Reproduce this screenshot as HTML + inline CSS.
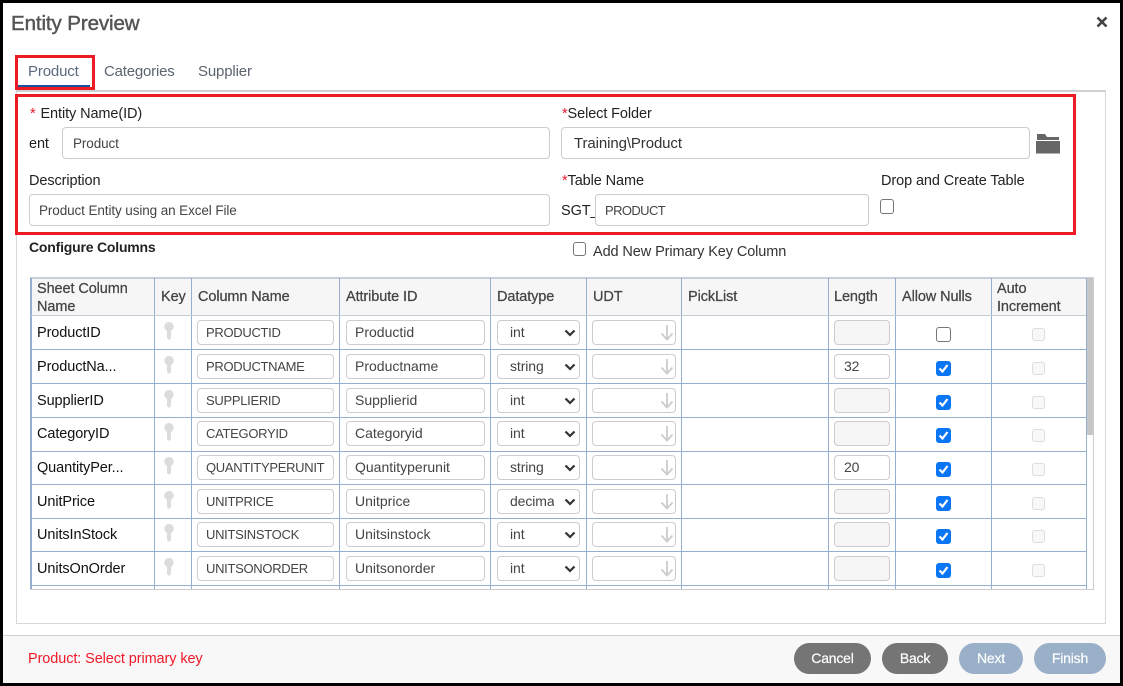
<!DOCTYPE html>
<html><head><meta charset="utf-8"><title>Entity Preview</title>
<style>
html,body{margin:0;padding:0;background:#000}
body{width:1123px;height:686px;overflow:hidden;position:relative;font-family:"Liberation Sans",sans-serif;font-size:14.5px;color:#222;letter-spacing:-.1px}
#w{position:absolute;left:3px;top:3px;width:1117px;height:680px;background:#fff}
#p{position:absolute;left:0;top:0;width:1123px;height:686px}
#p div,#p svg{position:absolute;box-sizing:border-box}
.t{white-space:nowrap;line-height:18px}
.f{background:#fff;border:1px solid #ccc;border-radius:4px;color:#444;white-space:nowrap;overflow:hidden}
.v{background:#94afd0}
.h{white-space:nowrap;line-height:18px;color:#444;-webkit-text-stroke:.25px #444}
.r{left:0;width:1123px;height:25px}
.s{left:37px;top:4px;line-height:18px;color:#111;white-space:nowrap}
.k{left:164px;top:2px}
.c{left:197px;top:0;width:137px;height:25px;line-height:23px;padding-left:8px;font-size:13px;letter-spacing:-.3px}
.i{left:346px;top:0;width:139px;height:25px;line-height:23px;padding-left:8px;font-size:14px;letter-spacing:0}
.d{left:497px;top:0;width:83px;height:25px;line-height:23px;padding-left:12px;font-size:14px}
.d span{display:block;width:44px;overflow:hidden}
.ch{left:564px;top:9px}
.u{left:592px;top:0;width:84px;height:25px}
.ar{left:660px;top:5px}
.l{left:834px;top:0;width:56px;height:25px;line-height:23px;padding-left:9px;background:#f6f6f6;font-size:14px}
.l.e{background:#fff}
.n{left:936px;top:7px;width:15px;height:15px;border-radius:3px;background:#0b76f5}
.n svg{left:2px;top:2px}
.n.o{background:#fff;border:1.5px solid #767676}
.a{left:1032px;top:8px;width:13px;height:13px;border:1px solid #ddd;border-radius:3px;background:#f8f8f8}
.b{border-radius:16px;height:31px;top:643px;color:#fff;text-align:center;line-height:31px;font-size:14px;letter-spacing:-.2px;-webkit-text-stroke:.2px #fff}
</style></head><body>
<div id="w"></div>
<div id="p">
<div class="t" style="left:11px;top:13px;font-size:20.500px;line-height:22px;color:#555;letter-spacing:-.1px;-webkit-text-stroke:.45px #555">Entity Preview</div>
<svg style="left:1096px;top:16px" width="12" height="12" viewBox="0 0 12 12"><path d="M1.5 1.5L10.5 10.5M10.5 1.5L1.5 10.5" stroke="#444" stroke-width="2.600"/></svg>

<!-- tab panel -->
<div style="left:16px;top:90px;width:1090px;height:534px;border:1px solid #d8d8d8;border-top:2px solid #d0d0d0"></div>
<div style="left:17px;top:85px;width:73px;height:3px;background:#1f4e9c"></div>
<div style="left:15px;top:55px;width:80px;height:35px;border:3px solid #ed1c24"></div>
<div class="t" style="left:28px;top:63px;color:#5a6b80;font-size:15px;letter-spacing:-.15px">Product</div>
<div class="t" style="left:104px;top:63px;color:#5b6470;font-size:15px;letter-spacing:-.2px">Categories</div>
<div class="t" style="left:198px;top:63px;color:#5b6470;font-size:15px;letter-spacing:-.15px">Supplier</div>

<!-- form -->
<div style="left:15px;top:94px;width:1061px;height:141px;border:3px solid #ed1c24"></div>
<div class="t" style="left:30px;top:105px"><span style="color:#e8192c">*</span>&nbsp;<span style="margin-left:1px">Entity Name(ID)</span></div>
<div class="t" style="left:29px;top:135px">ent</div>
<div class="f" style="left:62px;top:127px;width:488px;height:32px;line-height:31px;padding-left:10px;font-size:13.5px">Product</div>
<div class="t" style="left:29px;top:172px">Description</div>
<div class="f" style="left:29px;top:194px;width:521px;height:32px;line-height:31px;padding-left:9px;font-size:13.5px">Product Entity using an Excel File</div>
<div class="t" style="left:562px;top:105px"><span style="color:#e8192c">*</span>Select Folder</div>
<div class="f" style="left:561px;top:127px;width:469px;height:32px;line-height:31px;padding-left:12px;color:#333;font-size:15px">Training\Product</div>
<svg style="left:1036px;top:134px" width="24" height="20" viewBox="0 0 24 20"><path d="M1 0H9L11 3H23V6H1Z M0 7H24V19.500H0Z" fill="#666"/></svg>
<div class="t" style="left:562px;top:172px"><span style="color:#e8192c">*</span>Table Name</div>
<div class="t" style="left:561px;top:202px">SGT_</div>
<div class="f" style="left:595px;top:194px;width:274px;height:32px;line-height:31px;padding-left:9px;font-size:13px;letter-spacing:-.6px">PRODUCT</div>
<div class="t" style="left:881px;top:172px">Drop and Create Table</div>
<div style="left:880px;top:199px;width:14px;height:15px;border:1.5px solid #767676;border-radius:3px;background:#fff"></div>

<div class="t" style="left:29px;top:238px;font-weight:bold;font-size:14px;letter-spacing:-.2px;color:#222">Configure Columns</div>
<div style="left:573px;top:242px;width:13px;height:14px;border:1.5px solid #767676;border-radius:3px;background:#fff"></div>
<div class="t" style="left:593px;top:243px;color:#333">Add New Primary Key Column</div>

<!-- table frame -->
<div style="left:30px;top:277px;width:1064px;height:313px;border:1px solid #ccc;border-left:0;border-top:2px solid #c6d0dc"></div>
<div style="left:31px;top:279px;width:1055px;height:36px;background:#f6f6f6"></div>
<div style="left:1087px;top:278px;width:6px;height:157px;background:#c6c6c6"></div>

<div class="v" style="left:30px;top:278px;width:2px;height:311px"></div>
<div class="v" style="left:154px;top:278px;width:1px;height:311px"></div>
<div class="v" style="left:191px;top:278px;width:1px;height:311px"></div>
<div class="v" style="left:339px;top:278px;width:1px;height:311px"></div>
<div class="v" style="left:490px;top:278px;width:1px;height:311px"></div>
<div class="v" style="left:586px;top:278px;width:1px;height:311px"></div>
<div class="v" style="left:681px;top:278px;width:1px;height:311px"></div>
<div class="v" style="left:828px;top:278px;width:1px;height:311px"></div>
<div class="v" style="left:895px;top:278px;width:1px;height:311px"></div>
<div class="v" style="left:991px;top:278px;width:1px;height:311px"></div>
<div class="v" style="left:1086px;top:278px;width:1px;height:311px"></div>
<div style="left:31px;top:315px;width:1055px;height:1px;background:#c4ccd6"></div>
<div class="v" style="left:30px;top:349px;width:1056px;height:1px"></div>
<div class="v" style="left:30px;top:383px;width:1056px;height:1px"></div>
<div class="v" style="left:30px;top:417px;width:1056px;height:1px"></div>
<div class="v" style="left:30px;top:451px;width:1056px;height:1px"></div>
<div class="v" style="left:30px;top:484px;width:1056px;height:1px"></div>
<div class="v" style="left:30px;top:518px;width:1056px;height:1px"></div>
<div class="v" style="left:30px;top:551px;width:1056px;height:1px"></div>
<div class="v" style="left:30px;top:585px;width:1056px;height:1px"></div>

<!-- header -->
<div class="h" style="left:37px;top:280px">Sheet Column</div>
<div class="h" style="left:37px;top:298px">Name</div>
<div class="h" style="left:161px;top:288px">Key</div>
<div class="h" style="left:198px;top:288px">Column Name</div>
<div class="h" style="left:346px;top:288px">Attribute ID</div>
<div class="h" style="left:497px;top:288px">Datatype</div>
<div class="h" style="left:593px;top:288px">UDT</div>
<div class="h" style="left:688px;top:288px">PickList</div>
<div class="h" style="left:834px;top:288px">Length</div>
<div class="h" style="left:902px;top:288px">Allow Nulls</div>
<div class="h" style="left:997px;top:280px">Auto</div>
<div class="h" style="left:997px;top:298px">Increment</div>

<!-- rows -->
<div class="r" style="top:320px">
<div class="s">ProductID</div>
<svg class="k" width="10" height="18" viewBox="0 0 10 18"><path d="M5 0a4.6 4.6 0 0 1 2 8.8V16L5 18 3 16V8.8A4.6 4.6 0 0 1 5 0Z" fill="#dcdcdc"/></svg>
<div class="f c">PRODUCTID</div><div class="f i">Productid</div>
<div class="f d"><span>int</span></div>
<svg class="ch" width="12" height="8" viewBox="0 0 12 8"><path d="M1.5 1.5L6 6 10.500 1.500" fill="none" stroke="#333" stroke-width="2.200"/></svg>
<div class="f u"></div>
<svg class="ar" width="14" height="16" viewBox="0 0 14 16"><path d="M7 0V14M1.500 8.500L7 14.500 12.500 8.500" fill="none" stroke="#ccc" stroke-width="1.800"/></svg>
<div class="f l"></div>
<div class="n o"></div><div class="a"></div>
</div>

<div class="r" style="top:354px">
<div class="s">ProductNa...</div>
<svg class="k" width="10" height="18" viewBox="0 0 10 18"><path d="M5 0a4.6 4.6 0 0 1 2 8.8V16L5 18 3 16V8.8A4.6 4.6 0 0 1 5 0Z" fill="#dcdcdc"/></svg>
<div class="f c">PRODUCTNAME</div><div class="f i">Productname</div>
<div class="f d"><span>string</span></div>
<svg class="ch" width="12" height="8" viewBox="0 0 12 8"><path d="M1.5 1.5L6 6 10.500 1.500" fill="none" stroke="#333" stroke-width="2.200"/></svg>
<div class="f u"></div>
<svg class="ar" width="14" height="16" viewBox="0 0 14 16"><path d="M7 0V14M1.500 8.500L7 14.500 12.500 8.500" fill="none" stroke="#ccc" stroke-width="1.800"/></svg>
<div class="f l e">32</div>
<div class="n"><svg width="11" height="11" viewBox="0 0 11 11"><path d="M1.500 5.500L4.500 8.500 9.500 2" fill="none" stroke="#fff" stroke-width="2.200"/></svg></div><div class="a"></div>
</div>

<div class="r" style="top:388px">
<div class="s">SupplierID</div>
<svg class="k" width="10" height="18" viewBox="0 0 10 18"><path d="M5 0a4.6 4.6 0 0 1 2 8.8V16L5 18 3 16V8.8A4.6 4.6 0 0 1 5 0Z" fill="#dcdcdc"/></svg>
<div class="f c">SUPPLIERID</div><div class="f i">Supplierid</div>
<div class="f d"><span>int</span></div>
<svg class="ch" width="12" height="8" viewBox="0 0 12 8"><path d="M1.5 1.5L6 6 10.500 1.500" fill="none" stroke="#333" stroke-width="2.200"/></svg>
<div class="f u"></div>
<svg class="ar" width="14" height="16" viewBox="0 0 14 16"><path d="M7 0V14M1.500 8.500L7 14.500 12.500 8.500" fill="none" stroke="#ccc" stroke-width="1.800"/></svg>
<div class="f l"></div>
<div class="n"><svg width="11" height="11" viewBox="0 0 11 11"><path d="M1.500 5.500L4.500 8.500 9.500 2" fill="none" stroke="#fff" stroke-width="2.200"/></svg></div><div class="a"></div>
</div>

<div class="r" style="top:421px">
<div class="s">CategoryID</div>
<svg class="k" width="10" height="18" viewBox="0 0 10 18"><path d="M5 0a4.6 4.6 0 0 1 2 8.8V16L5 18 3 16V8.8A4.6 4.6 0 0 1 5 0Z" fill="#dcdcdc"/></svg>
<div class="f c">CATEGORYID</div><div class="f i">Categoryid</div>
<div class="f d"><span>int</span></div>
<svg class="ch" width="12" height="8" viewBox="0 0 12 8"><path d="M1.5 1.5L6 6 10.500 1.500" fill="none" stroke="#333" stroke-width="2.200"/></svg>
<div class="f u"></div>
<svg class="ar" width="14" height="16" viewBox="0 0 14 16"><path d="M7 0V14M1.500 8.500L7 14.500 12.500 8.500" fill="none" stroke="#ccc" stroke-width="1.800"/></svg>
<div class="f l"></div>
<div class="n"><svg width="11" height="11" viewBox="0 0 11 11"><path d="M1.500 5.500L4.500 8.500 9.500 2" fill="none" stroke="#fff" stroke-width="2.200"/></svg></div><div class="a"></div>
</div>

<div class="r" style="top:455px">
<div class="s">QuantityPer...</div>
<svg class="k" width="10" height="18" viewBox="0 0 10 18"><path d="M5 0a4.6 4.6 0 0 1 2 8.8V16L5 18 3 16V8.8A4.6 4.6 0 0 1 5 0Z" fill="#dcdcdc"/></svg>
<div class="f c">QUANTITYPERUNIT</div><div class="f i">Quantityperunit</div>
<div class="f d"><span>string</span></div>
<svg class="ch" width="12" height="8" viewBox="0 0 12 8"><path d="M1.5 1.5L6 6 10.500 1.500" fill="none" stroke="#333" stroke-width="2.200"/></svg>
<div class="f u"></div>
<svg class="ar" width="14" height="16" viewBox="0 0 14 16"><path d="M7 0V14M1.500 8.500L7 14.500 12.500 8.500" fill="none" stroke="#ccc" stroke-width="1.800"/></svg>
<div class="f l e">20</div>
<div class="n"><svg width="11" height="11" viewBox="0 0 11 11"><path d="M1.500 5.500L4.500 8.500 9.500 2" fill="none" stroke="#fff" stroke-width="2.200"/></svg></div><div class="a"></div>
</div>

<div class="r" style="top:489px">
<div class="s">UnitPrice</div>
<svg class="k" width="10" height="18" viewBox="0 0 10 18"><path d="M5 0a4.6 4.6 0 0 1 2 8.8V16L5 18 3 16V8.8A4.6 4.6 0 0 1 5 0Z" fill="#dcdcdc"/></svg>
<div class="f c">UNITPRICE</div><div class="f i">Unitprice</div>
<div class="f d"><span>decimal</span></div>
<svg class="ch" width="12" height="8" viewBox="0 0 12 8"><path d="M1.5 1.5L6 6 10.500 1.500" fill="none" stroke="#333" stroke-width="2.200"/></svg>
<div class="f u"></div>
<svg class="ar" width="14" height="16" viewBox="0 0 14 16"><path d="M7 0V14M1.500 8.500L7 14.500 12.500 8.500" fill="none" stroke="#ccc" stroke-width="1.800"/></svg>
<div class="f l"></div>
<div class="n"><svg width="11" height="11" viewBox="0 0 11 11"><path d="M1.500 5.500L4.500 8.500 9.500 2" fill="none" stroke="#fff" stroke-width="2.200"/></svg></div><div class="a"></div>
</div>

<div class="r" style="top:522px">
<div class="s">UnitsInStock</div>
<svg class="k" width="10" height="18" viewBox="0 0 10 18"><path d="M5 0a4.6 4.6 0 0 1 2 8.8V16L5 18 3 16V8.8A4.6 4.6 0 0 1 5 0Z" fill="#dcdcdc"/></svg>
<div class="f c">UNITSINSTOCK</div><div class="f i">Unitsinstock</div>
<div class="f d"><span>int</span></div>
<svg class="ch" width="12" height="8" viewBox="0 0 12 8"><path d="M1.5 1.5L6 6 10.500 1.500" fill="none" stroke="#333" stroke-width="2.200"/></svg>
<div class="f u"></div>
<svg class="ar" width="14" height="16" viewBox="0 0 14 16"><path d="M7 0V14M1.500 8.500L7 14.500 12.500 8.500" fill="none" stroke="#ccc" stroke-width="1.800"/></svg>
<div class="f l"></div>
<div class="n"><svg width="11" height="11" viewBox="0 0 11 11"><path d="M1.500 5.500L4.500 8.500 9.500 2" fill="none" stroke="#fff" stroke-width="2.200"/></svg></div><div class="a"></div>
</div>

<div class="r" style="top:556px">
<div class="s">UnitsOnOrder</div>
<svg class="k" width="10" height="18" viewBox="0 0 10 18"><path d="M5 0a4.6 4.6 0 0 1 2 8.8V16L5 18 3 16V8.8A4.6 4.6 0 0 1 5 0Z" fill="#dcdcdc"/></svg>
<div class="f c">UNITSONORDER</div><div class="f i">Unitsonorder</div>
<div class="f d"><span>int</span></div>
<svg class="ch" width="12" height="8" viewBox="0 0 12 8"><path d="M1.5 1.5L6 6 10.500 1.500" fill="none" stroke="#333" stroke-width="2.200"/></svg>
<div class="f u"></div>
<svg class="ar" width="14" height="16" viewBox="0 0 14 16"><path d="M7 0V14M1.500 8.500L7 14.500 12.500 8.500" fill="none" stroke="#ccc" stroke-width="1.800"/></svg>
<div class="f l"></div>
<div class="n"><svg width="11" height="11" viewBox="0 0 11 11"><path d="M1.500 5.500L4.500 8.500 9.500 2" fill="none" stroke="#fff" stroke-width="2.200"/></svg></div><div class="a"></div>
</div>

<!-- footer -->
<div style="left:3px;top:635px;width:1117px;height:48px;background:#f8f8f8;border-top:1px solid #d0d0d0"></div>
<div class="t" style="left:28px;top:650px;color:#f0192a">Product: Select primary key</div>
<div class="b" style="left:794px;width:77px;background:#757575">Cancel</div>
<div class="b" style="left:882px;width:66px;background:#757575">Back</div>
<div class="b" style="left:959px;width:64px;background:#9ab0c8">Next</div>
<div class="b" style="left:1034px;width:72px;background:#9ab0c8">Finish</div>
</div>
</body></html>
